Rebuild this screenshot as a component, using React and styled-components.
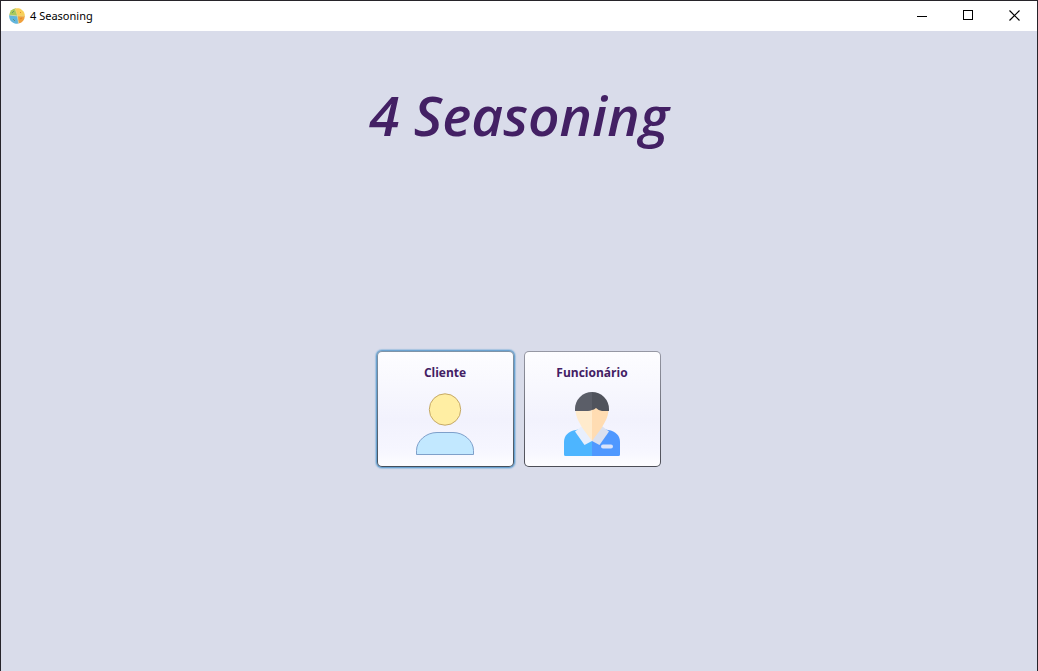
import React from "react";
import styled, { createGlobalStyle, css } from "styled-components";

const GlobalStyle = createGlobalStyle`
  * { box-sizing: border-box; }
  body { margin: 0; background: #d9dcea; }
`;

const Window = styled.div`
  display: flex;
  flex-direction: column;
  min-height: 100vh;
  border: 1px solid #27242a;
  border-bottom: 0;
  background: #d9dcea;
`;

const TitleBar = styled.header`
  display: flex;
  align-items: center;
  height: 30px;
  padding-left: 8px;
  background: #fff;
  color: #000;
  font: 11px/16px "Noto Sans", sans-serif;
`;

const AppName = styled.span`
  flex: 1;
  margin-left: 5px;
`;

const WindowButton = styled.button`
  display: grid;
  place-items: center;
  width: 46px;
  height: 30px;
  padding: 0 0 2px;
  border: 0;
  background: transparent;
`;

const Main = styled.main`
  display: flex;
  flex-direction: column;
  align-items: center;
  padding: 48px 24px 24px;
`;

const Heading = styled.h1`
  margin: 0 0 200px;
  color: #432064;
  font: italic 600 55px/72px "Open Sans", "Noto Sans", sans-serif;
`;

const Choices = styled.div`
  display: flex;
  flex-wrap: wrap;
  justify-content: center;
  gap: 10px;
`;

const ChoiceButton = styled.button`
  display: flex;
  flex-direction: column;
  align-items: center;
  gap: 10px;
  width: 137px;
  padding: 12px 9px 10px 8px;
  border: 1px solid transparent;
  border-radius: 5px;
  background:
    linear-gradient(#fdfdff, #f2f2fd 60%, #f6f6ff 85%, #fdfdff) padding-box,
    linear-gradient(#9698a4, #4c4d56) border-box;
  color: #432064;
  font: 700 12px/18px "Open Sans", "Noto Sans", sans-serif;
  outline: none;
  ${(p) => p.$active && css`
    background:
      linear-gradient(#fdfdff, #f2f2fd 60%, #f6f6ff 85%, #fdfdff) padding-box,
      linear-gradient(#7f94a8, #45505c) border-box;
    box-shadow: 0 0 0 1px #6ba2d0, 0 0 1px 2px #a5c3e0;
  `}
`;

function Logo() {
  return (
    <svg width="16" height="16" viewBox="0 0 16 16" aria-hidden="true">
      <path d="M8.500 8 7 .2A7.8 7.8 0 0 0 .2 7Z" fill="#a9c95b" />
      <path d="M8.500 8 6 .4A7.800 7.800 0 0 1 15.800 8.500Z" fill="#f8cf5a" />
      <path d="M8.500 8 15.800 8A7.800 7.800 0 0 1 9.500 15.600Z" fill="#f0a03c" />
      <path d="M8.500 8 .2 7A7.800 7.800 0 0 0 9.500 15.600Z" fill="#62b5dc" />
      <path d="M6 .4 8.500 8 15.800 8.300M.2 7 8.500 8 9.500 15.600" fill="none" stroke="#e6dc98" strokeWidth=".6" />
      <path d="m3 5 2-2M4 11l2 2" stroke="#548f70" strokeWidth=".8" />
      <path d="m11 11 2-1M11 4l1 1" stroke="#d97b28" strokeWidth=".8" />
    </svg>
  );
}

function ClientIcon() {
  return (
    <svg width="64" height="64" viewBox="0 0 64 64" aria-hidden="true">
      <circle cx="32" cy="17.500" r="15.700" fill="#ffeea3" stroke="#bea05c" strokeWidth=".9" />
      <path d="M3.500 62.500v-4C3.500 49 13 40.500 24 40.500h16c11 0 20.500 8.500 20.500 18v4Z" fill="#c2e8ff" stroke="#7496c4" strokeWidth=".9" />
    </svg>
  );
}

function EmployeeIcon() {
  return (
    <svg width="64" height="64" viewBox="0 0 64 64" aria-hidden="true">
      <path d="M16 38C8 39 4 44 4 50v12.500Q4 64 5.500 64H32V48L20 37Z" fill="#4db5ff" />
      <path d="M48 38C56 39 60 44 60 50v12.500Q60 64 58.500 64H32V48l12-11Z" fill="#4f98ff" />
      <path d="m21.500 34.500-6.500 5 9.500 13.500 7.500-4V42Z" fill="#e8effd" />
      <path d="m42.500 34.500 6.500 5-9.500 13.500-7.500-4V42Z" fill="#dae0ef" />
      <path d="M15.500 17C15.500 26 20 31 22 35.500L32 49V13Z" fill="#ffebcd" />
      <path d="M48.500 17C48.500 26 44 31 42 35.500L32 49V13Z" fill="#ffdcb2" />
      <path d="M32 0A17 17 0 0 0 15 17v2h13q2 0 4-1Z" fill="#5b5e68" />
      <path d="M32 0a17 17 0 0 1 17 17v2h-7q-3 0-6-3-2 2-4 2Z" fill="#50535c" />
      <rect x="41" y="52.500" width="12" height="4" rx="2" fill="#dae3fa" />
    </svg>
  );
}

export default function App() {
  return (
    <Window>
      <GlobalStyle />
      <TitleBar>
        <Logo />
        <AppName>4 Seasoning</AppName>
        <WindowButton type="button" aria-label="Minimizar">
          <svg width="12" height="11" shapeRendering="crispEdges"><path d="M1 6.500h10" stroke="#000" /></svg>
        </WindowButton>
        <WindowButton type="button" aria-label="Maximizar">
          <svg width="11" height="11" shapeRendering="crispEdges"><path d="M.5.500h9v9h-9Z" fill="none" stroke="#000" /></svg>
        </WindowButton>
        <WindowButton type="button" aria-label="Fechar">
          <svg width="11" height="11"><path d="m.5.500 10 10m0-10-10 10" stroke="#000" strokeWidth="1.200" /></svg>
        </WindowButton>
      </TitleBar>
      <Main>
        <Heading>4 Seasoning</Heading>
        <Choices>
          <ChoiceButton type="button" $active>
            Cliente
            <ClientIcon />
          </ChoiceButton>
          <ChoiceButton type="button">
            Funcionário
            <EmployeeIcon />
          </ChoiceButton>
        </Choices>
      </Main>
    </Window>
  );
}
